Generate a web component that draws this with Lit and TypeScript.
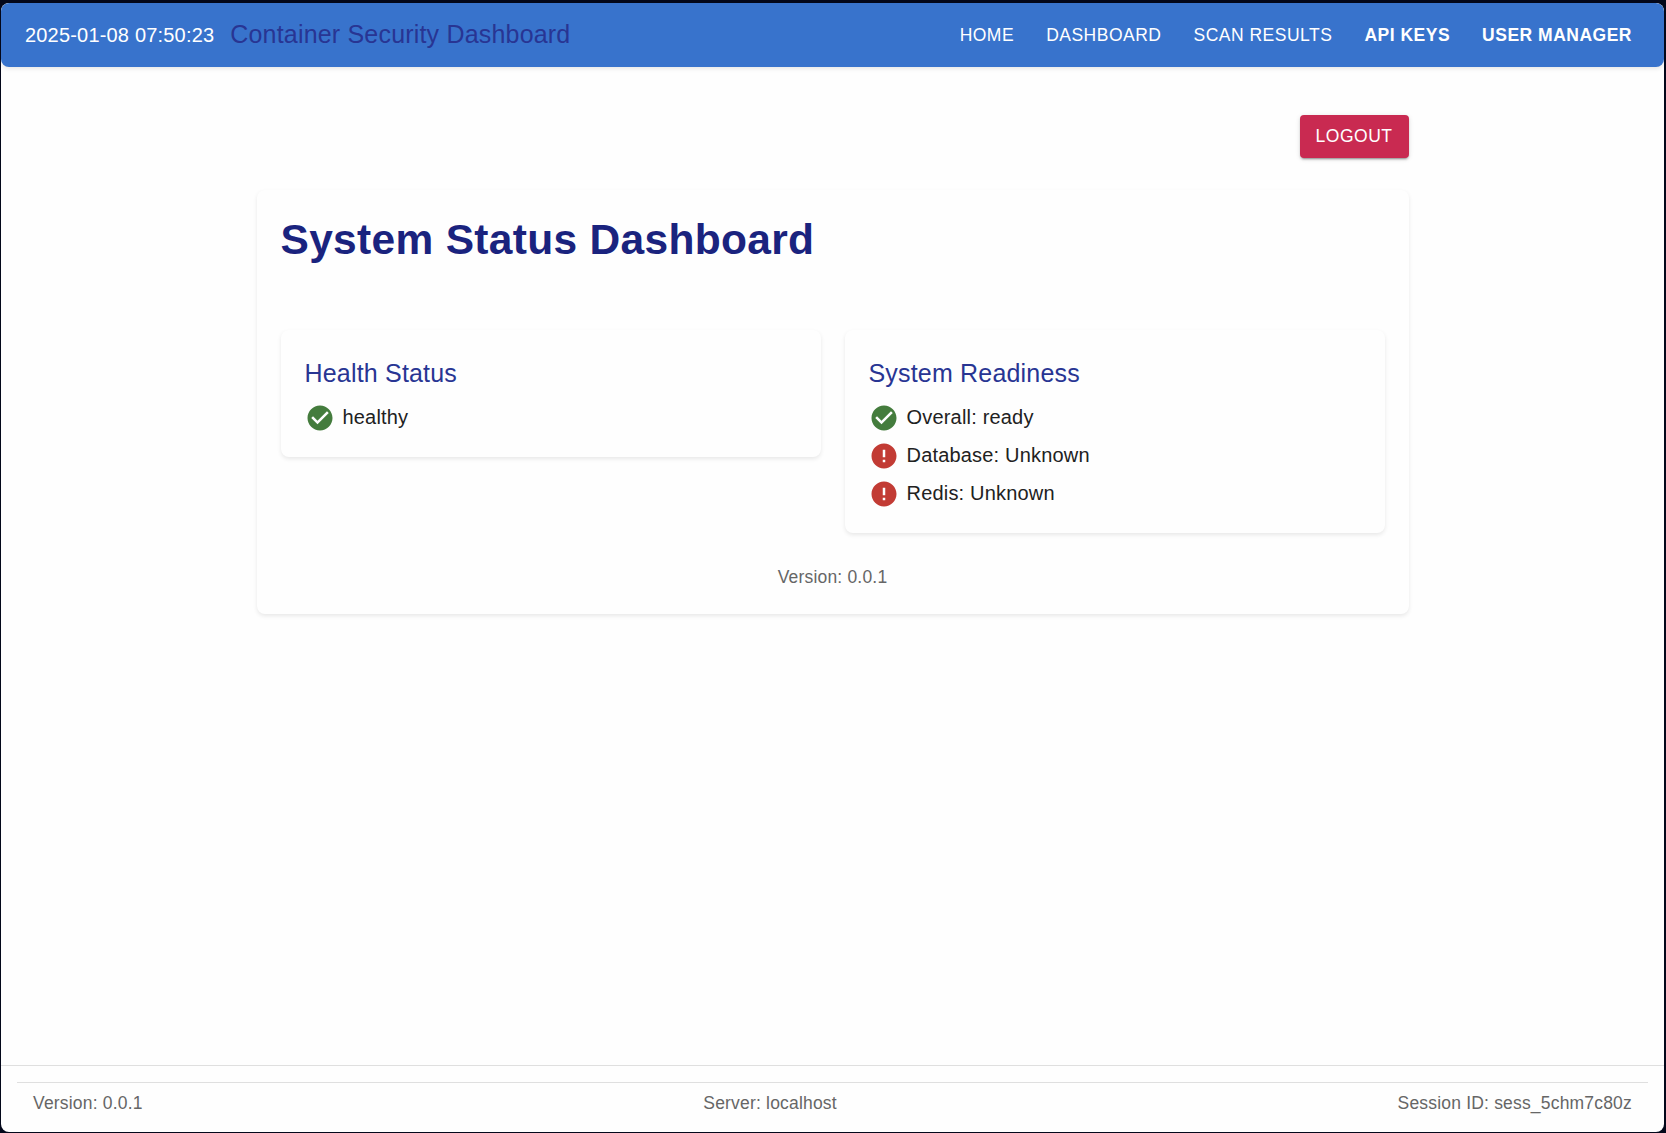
import { LitElement, html, css, svg } from "lit";
import { customElement, property } from "lit/decorators.js";

const CHECK =
  "M12 2C6.48 2 2 6.48 2 12s4.48 10 10 10 10-4.48 10-10S17.52 2 12 2zm-2 15-5-5 1.41-1.41L10 14.17l7.59-7.59L19 8l-9 9z";
const ERROR =
  "M12 2C6.48 2 2 6.48 2 12s4.48 10 10 10 10-4.48 10-10S17.52 2 12 2zm1 15h-2v-2h2v2zm0-4h-2V7h2v6z";

@customElement("status-row")
class StatusRow extends LitElement {
  @property({ type: Boolean }) ok = false;
  @property() label = "";

  static styles = css`
    :host {
      display: flex;
      align-items: center;
      gap: 8px;
      height: 30px;
    }
    .icon {
      width: 30px;
      height: 30px;
      flex: none;
      fill: #c23b34;
    }
    .icon.ok {
      fill: #447c3d;
    }
    .label {
      padding-bottom: 2px;
      font-size: 20px;
      line-height: 28px;
      letter-spacing: 0.00938em;
      color: #212121;
    }
  `;

  render() {
    return html`
      <svg class="icon ${this.ok ? "ok" : ""}" viewBox="0 0 24 24">
        ${svg`<path d=${this.ok ? CHECK : ERROR}></path>`}
      </svg>
      <span class="label">${this.label}</span>
    `;
  }
}

@customElement("app-root")
class AppRoot extends LitElement {
  static styles = css`
    :host {
      display: block;
      box-sizing: border-box;
      height: 1133px;
      padding: 3px 2px 1px 1px;
      background: #03071a;
      font-family: "Liberation Sans", Arial, sans-serif;
    }
    .window {
      box-sizing: border-box;
      height: 100%;
      display: flex;
      flex-direction: column;
      background: #fefefe;
      border-radius: 8px;
      overflow: hidden;
    }
    .bar {
      display: flex;
      align-items: center;
      flex: none;
      height: 64px;
      box-sizing: border-box;
      padding: 0 24px;
      gap: 16px;
      background: #3873cc;
      border-radius: 8px;
      box-shadow: 0 2px 4px rgba(0, 0, 0, 0.09);
    }
    .time {
      font-size: 20px;
      line-height: 30px;
      letter-spacing: 0.00938em;
      color: #fff;
    }
    .brand {
      flex: 1;
      padding-bottom: 2px;
      font-size: 25px;
      line-height: 40px;
      letter-spacing: 0.0075em;
      color: #283593;
    }
    .nav {
      display: flex;
      gap: 16px;
    }
    .link {
      padding: 6px 8px;
      font-size: 17.5px;
      line-height: 1.75;
      letter-spacing: 0.02857em;
      color: #fff;
      text-decoration: none;
      white-space: nowrap;
    }
    .link.strong {
      font-weight: 700;
    }
    .main {
      flex: 1;
      width: 1152px;
      margin: 0 auto;
      padding-top: 48px;
    }
    .actions {
      display: flex;
      justify-content: flex-end;
      margin-bottom: 32px;
    }
    .logout {
      border: 0;
      border-radius: 4px;
      padding: 6px 16px;
      background: #c92a51;
      color: #fff;
      font-family: inherit;
      font-size: 17.5px;
      line-height: 1.75;
      letter-spacing: 0.02857em;
      box-shadow:
        0 3px 1px -2px rgba(0, 0, 0, 0.2),
        0 2px 2px 0 rgba(0, 0, 0, 0.14),
        0 1px 5px 0 rgba(0, 0, 0, 0.12);
    }
    .panel,
    .card {
      box-sizing: border-box;
      padding: 24px;
      border-radius: 8px;
      background: #fefefe;
      box-shadow: 0 2px 4px rgba(0, 0, 0, 0.09);
    }
    .title {
      margin: 0 0 63.8px;
      font-size: 42.5px;
      line-height: 1.235;
      letter-spacing: 0.00735em;
      font-weight: 700;
      color: #1a237e;
    }
    .cards {
      display: grid;
      grid-template-columns: 1fr 1fr;
      align-items: start;
      gap: 24px;
    }
    .heading {
      margin: 0 0 10.75px;
      font-size: 25px;
      line-height: 38px;
      letter-spacing: 0.0075em;
      font-weight: 400;
      color: #283593;
    }
    .rows {
      display: flex;
      flex-direction: column;
      gap: 8px;
    }
    .small {
      font-size: 17.5px;
      line-height: 25px;
      letter-spacing: 0.01071em;
      color: #666;
    }
    .version {
      margin-top: 32px;
      text-align: center;
    }
    .footer {
      flex: none;
      padding: 16px;
      border-top: 1px solid #dfdfdf;
    }
    .meta {
      display: flex;
      justify-content: space-between;
      padding: 8px 16px 0;
      border-top: 1px solid #dfdfdf;
    }
  `;

  render() {
    return html`
      <div class="window">
        <header class="bar">
          <span class="time">2025-01-08 07:50:23</span>
          <span class="brand">Container Security Dashboard</span>
          <nav class="nav">
            <a class="link">HOME</a>
            <a class="link">DASHBOARD</a>
            <a class="link">SCAN RESULTS</a>
            <a class="link strong">API KEYS</a>
            <a class="link strong">USER MANAGER</a>
          </nav>
        </header>
        <main class="main">
          <div class="actions"><button class="logout">LOGOUT</button></div>
          <section class="panel">
            <h1 class="title">System Status Dashboard</h1>
            <div class="cards">
              <div class="card">
                <h2 class="heading">Health Status</h2>
                <status-row ok label="healthy"></status-row>
              </div>
              <div class="card">
                <h2 class="heading">System Readiness</h2>
                <div class="rows">
                  <status-row ok label="Overall: ready"></status-row>
                  <status-row label="Database: Unknown"></status-row>
                  <status-row label="Redis: Unknown"></status-row>
                </div>
              </div>
            </div>
            <div class="small version">Version: 0.0.1</div>
          </section>
        </main>
        <footer class="footer">
          <div class="small meta">
            <span>Version: 0.0.1</span>
            <span>Server: localhost</span>
            <span>Session ID: sess_5chm7c80z</span>
          </div>
        </footer>
      </div>
    `;
  }
}
